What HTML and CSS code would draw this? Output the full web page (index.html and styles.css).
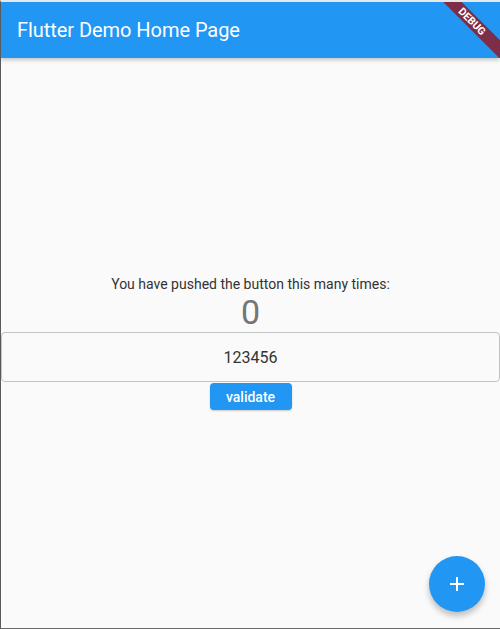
FILE: index.html
```html
<!DOCTYPE html>
<html>
<head>
<meta charset="utf-8">
<link rel="stylesheet" href="styles.css">
</head>
<body>
<div class="frame">
  <header class="appbar">
    <h1 class="title">Flutter Demo Home Page</h1>
    <div class="banner"><span>DEBUG</span></div>
  </header>
  <main class="content">
    <div class="column">
      <p class="label">You have pushed the button this many times:</p>
      <p class="counter">0</p>
      <div class="field"><span>123456</span></div>
      <button class="validate">validate</button>
    </div>
    <button class="fab" aria-label="Increment">
      <svg width="24" height="24" viewBox="0 0 24 24"><path d="M19 13h-6v6h-2v-6H5v-2h6V5h2v6h6v2z" fill="#fff"/></svg>
    </button>
  </main>
</div>
</body>
</html>
```
FILE: styles.css
```css
html, body {
  margin: 0;
  padding: 0;
  background: #fafafa;
}
body {
  width: 500px;
  height: 629px;
  overflow: hidden;
  font-family: Roboto, "Noto Sans", sans-serif;
}
.frame {
  box-sizing: border-box;
  width: 500px;
  height: 629px;
  border-top: 2px solid #e8e8e8;
  border-left: 1px solid #5a5a5a;
  border-bottom: 1px solid #6a6a6a;
  display: flex;
  flex-direction: column;
  position: relative;
  overflow: hidden;
}
.appbar {
  height: 56px;
  flex: none;
  background: #2196f3;
  box-shadow: 0 2px 4px rgba(0,0,0,0.22);
  position: relative;
  z-index: 2;
  display: flex;
  align-items: center;
  overflow: hidden;
}
.title {
  margin: 0 0 0 16px;
  font-size: 20px;
  font-weight: 400;
  letter-spacing: -0.05px;
  color: #fff;
}
.banner {
  position: absolute;
  top: 13px;
  right: -32px;
  width: 120px;
  height: 13px;
  background: #7d2d47;
  transform: rotate(45deg);
  display: flex;
  align-items: center;
  justify-content: center;
}
.banner span {
  color: #fff;
  font-size: 10.5px;
  font-weight: 700;
  line-height: 13px;
}
.content {
  flex: 1;
  position: relative;
  display: flex;
  align-items: center;
  justify-content: center;
}
.column {
  width: 100%;
  display: flex;
  flex-direction: column;
  align-items: center;
}
.label {
  margin: 0;
  font-size: 14px;
  line-height: 16px;
  color: #333;
}
.counter {
  margin: 0;
  font-size: 34px;
  line-height: 40px;
  color: #757575;
}
.field {
  box-sizing: border-box;
  width: 100%;
  height: 50px;
  border: 1.5px solid #c2c2c2;
  border-radius: 4px;
  display: flex;
  align-items: center;
  justify-content: center;
  font-size: 16px;
  color: #333;
}
.validate {
  margin-top: 1px;
  width: 82px;
  height: 27px;
  border: none;
  border-radius: 4px;
  background: #2196f3;
  color: #fff;
  font-family: Roboto, sans-serif;
  font-size: 14px;
  font-weight: 500;
  padding: 0;
  box-shadow: 0 1px 2px rgba(0,0,0,0.2);
}
.fab {
  position: absolute;
  right: 15px;
  bottom: 16px;
  width: 56px;
  height: 56px;
  border-radius: 50%;
  border: none;
  background: #2196f3;
  box-shadow: 0 4px 6px rgba(0,0,0,0.25);
  display: flex;
  align-items: center;
  justify-content: center;
  padding: 0;
}
```
